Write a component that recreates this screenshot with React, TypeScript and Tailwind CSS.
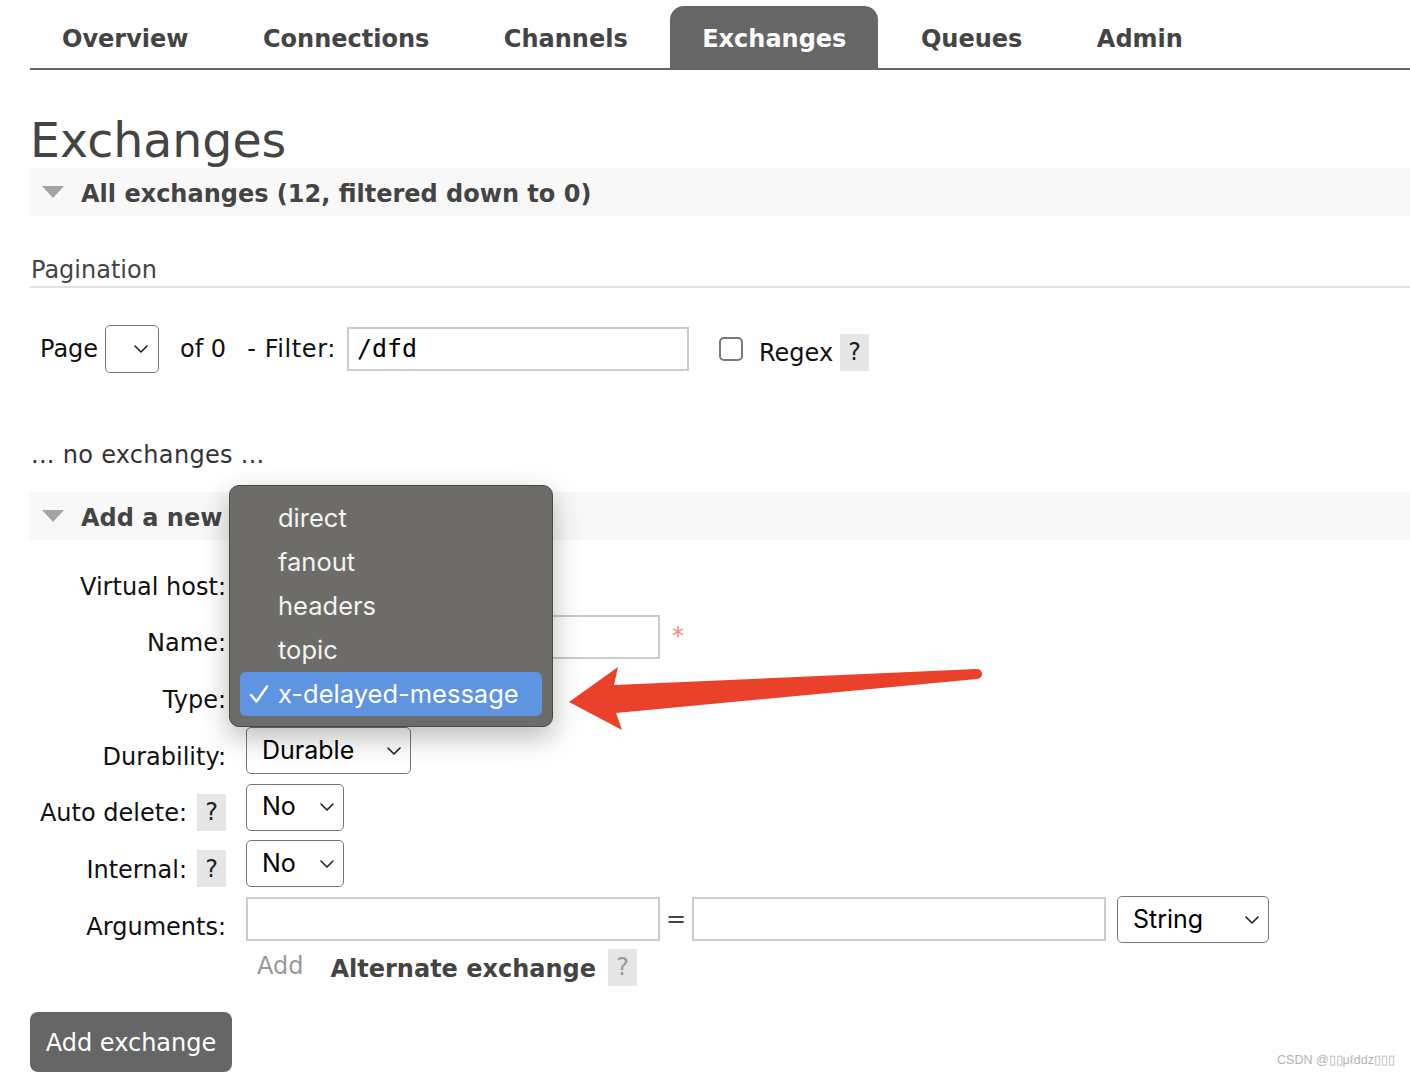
import { ReactNode } from 'react';

const tabs = ['Overview', 'Connections', 'Channels', 'Exchanges', 'Queues', 'Admin'];
const types = ['direct', 'fanout', 'headers', 'topic'];

function Chevron({ className = '' }: { className?: string }) {
  return (
    <svg viewBox="0 0 14 8" className={`h-[8px] w-[14px] ${className}`} fill="none">
      <path d="M1 1l6 6 6-6" stroke="#222" strokeWidth="1.6" strokeLinecap="round" strokeLinejoin="round" />
    </svg>
  );
}

function Select({ value, width }: { value: string; width: string }) {
  return (
    <div
      className={`flex h-[47px] items-center justify-between rounded-[5px] border-[1.5px] border-[#767676] bg-white pl-[15px] pr-[9px] font-['Inter',sans-serif] text-[25px] text-black ${width}`}
    >
      <span>{value}</span>
      <Chevron />
    </div>
  );
}

function Help({ muted = false }: { muted?: boolean }) {
  return (
    <span
      className={`inline-flex h-[37px] w-[29px] items-center justify-center bg-[#e6e6e6] text-[24px] ${
        muted ? 'text-[#999]' : 'text-[#222]'
      }`}
    >
      ?
    </span>
  );
}

function SectionHeader({ children }: { children: ReactNode }) {
  return (
    <div className="flex h-[48px] items-center bg-[#f8f8f8]">
      <svg viewBox="0 0 22 12" className="ml-[12px] h-[12px] w-[22px]">
        <polygon points="0,0 22,0 11,12" fill="#a3a3a3" />
      </svg>
      <h2 className="ml-[17px] pt-[4px] text-[24px] font-bold text-[#444]">{children}</h2>
    </div>
  );
}

function Row({ label, help, height, children }: { label: string; help?: boolean; height: string; children?: ReactNode }) {
  return (
    <div className={`flex items-center ${height}`}>
      <div className="flex w-[196px] items-center justify-end gap-[10px] pt-[12px] text-[24px] text-[#111]">
        <span>{label}</span>
        {help && <span className="-mt-[2px]"><Help /></span>}
      </div>
      <div className="ml-[20px] flex items-center">{children}</div>
    </div>
  );
}

function TextBox({ width }: { width: string }) {
  return <div className={`h-[44px] border-2 border-[#ccc] bg-white ${width}`} />;
}

export default function App() {
  return (
    <div className="relative h-[1078px] w-[1410px] overflow-hidden bg-white font-['DejaVu_Sans',Verdana,sans-serif] text-[#222]">
      {/* Top navigation */}
      <nav className="ml-[30px] flex h-[70px] items-end gap-[10.5px] border-b-2 border-[#666] pt-[6px]">
        {tabs.map((t) => (
          <a
            key={t}
            className={`flex h-[62px] items-center rounded-t-[14px] px-[32px] pt-[4px] text-[24px] font-bold ${
              t === 'Exchanges' ? 'bg-[#666] text-white' : 'text-[#444]'
            }`}
          >
            {t}
          </a>
        ))}
      </nav>

      <div className="ml-[30px]">
        <h1 className="mt-[43px] h-[55px] text-[47.4px] leading-[55px] text-[#444]">Exchanges</h1>

        <SectionHeader>All exchanges (12, filtered down to 0)</SectionHeader>

        <h3 className="mt-[40px] border-b-2 border-[#e2e2e2] pb-[2px] pl-[1px] text-[24px] leading-[28px] text-[#444]">
          Pagination
        </h3>

        {/* Pagination controls */}
        <div className="mt-[37px] flex h-[48px] items-center pl-[10px] text-[24px] text-[#111]">
          <span>Page</span>
          <div className="ml-[7px] flex h-[48px] w-[54px] items-center justify-end rounded-[5px] border-[1.5px] border-[#767676] pr-[10px]">
            <Chevron />
          </div>
          <span className="ml-[21px]">of 0</span>
          <span className="ml-[21px] tracking-[0.6px]">- Filter:</span>
          <div className="ml-[11px] flex h-[44px] w-[342px] items-center border-2 border-[#ccc] pl-[8px] font-['DejaVu_Sans_Mono',monospace] text-[25px] text-black">
            /dfd
          </div>
          <span className="ml-[30px] h-[24px] w-[24px] rounded-[5px] border-2 border-[#7a7a7a]" />
          <span className="ml-[16px] translate-y-[4px]">Regex</span>
          <span className="ml-[7px] translate-y-[3px]">
            <Help />
          </span>
        </div>

        <p className="mt-[67px] h-[30px] pl-[1px] text-[24px] leading-[30px] tracking-[0.3px] text-[#333]">
          ... no exchanges ...
        </p>

        <div className="mt-[22px]">
          <SectionHeader>Add a new exchange</SectionHeader>
        </div>

        {/* Form */}
        <div className="mt-[13px]">
          <Row label="Virtual host:" height="h-[56px]">
            <Select value="/" width="w-[190px]" />
          </Row>
          <Row label="Name:" height="h-[56px]">
            <TextBox width="w-[414px]" />
            <span className="ml-[12px] -mt-[2px] text-[24px] text-[#f08a84]">*</span>
          </Row>
          <Row label="Type:" height="h-[57px]">
            <Select value="x-delayed-message" width="w-[290px]" />
          </Row>
          <Row label="Durability:" height="h-[57px]">
            <Select value="Durable" width="w-[165px]" />
          </Row>
          <Row label="Auto delete:" help height="h-[56px]">
            <Select value="No" width="w-[98px]" />
          </Row>
          <Row label="Internal:" help height="h-[57px]">
            <Select value="No" width="w-[98px]" />
          </Row>
          <Row label="Arguments:" height="h-[57px]">
            <div className="-mt-[4px] flex items-center">
              <TextBox width="w-[414px]" />
              <span className="w-[32px] text-center text-[24px] text-[#444]">=</span>
              <TextBox width="w-[414px]" />
              <div className="ml-[11px] mt-[2px]">
                <Select value="String" width="w-[152px]" />
              </div>
            </div>
          </Row>
          <div className="flex h-[36px] items-center pl-[227px] text-[24px]">
            <span className="-mt-[2px] text-[#999]">Add</span>
            <span className="ml-[27px] mt-[4px] font-bold text-[#444]">Alternate exchange</span>
            <span className="ml-[12px]">
              <Help muted />
            </span>
          </div>
        </div>

        <button className="mt-[27px] h-[60px] w-[202px] rounded-[8px] bg-[#666] pt-[2px] text-[24px] text-white">
          Add exchange
        </button>
      </div>

      {/* Native select popup */}
      <div className="absolute left-[229px] top-[485px] w-[324px] rounded-[10px] border border-[#4a4a48] bg-[#6d6c68] p-[10px] font-['Inter',sans-serif] text-[25.5px] text-[#f3f3f3] shadow-[0_10px_28px_rgba(0,0,0,0.28)]">
        {types.map((t) => (
          <div key={t} className="flex h-[44px] items-center pl-[38px]">
            {t}
          </div>
        ))}
        <div className="flex h-[44px] items-center rounded-[6px] bg-[#5f94e1] pl-[9px] text-white">
          <svg viewBox="0 0 20 20" className="h-[20px] w-[20px]" fill="none">
            <path d="M2 11l5.5 6.5L18 2.5" stroke="white" strokeWidth="2.4" strokeLinecap="round" strokeLinejoin="round" />
          </svg>
          <span className="ml-[9px]">x-delayed-message</span>
        </div>
      </div>

      {/* Annotation arrow */}
      <svg className="absolute left-[560px] top-[660px] h-[80px] w-[430px]" viewBox="0 0 430 80">
        <path d="M9 42 L58 7 L54 25 L417 9 A5 5 0 0 1 417 19 L56 53 L62 70 Z" fill="#e9412a" />
      </svg>

      <span className="absolute bottom-[8px] right-[15px] font-['Liberation_Sans',Arial,sans-serif] text-[12.5px] text-[#b3b3b3]">
        CSDN @▯▯μℓddz▯▯▯
      </span>
    </div>
  );
}
